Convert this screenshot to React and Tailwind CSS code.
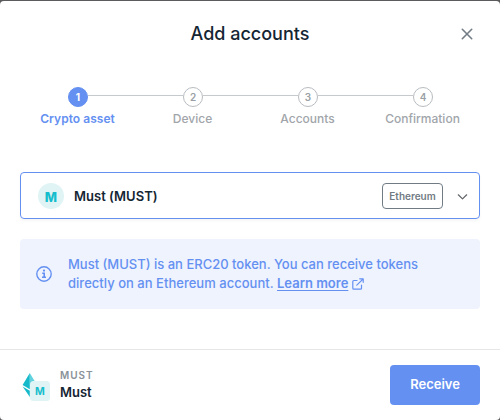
const steps = ["Crypto asset", "Device", "Accounts", "Confirmation"];

function Stepper() {
  return (
    <div className="mt-[21px] grid grid-cols-4 px-5">
      {steps.map((label, i) => (
        <div key={label} className="flex flex-col items-center">
          <div className="flex w-full items-start">
            <div className={`mt-[8px] h-px w-12 ${i > 0 ? "bg-[#c6cacd]" : ""}`} />
            <div
              className={`flex size-5 shrink-0 items-center justify-center rounded-full border text-[10px] leading-none ${
                i === 0 ? "border-[#6490f1] bg-[#6490f1] font-bold text-white" : "border-[#b8bcc0] bg-white font-semibold text-[#999fa5]"
              }`}
            >
              {i + 1}
            </div>
            <div className={`mt-[8px] h-px flex-1 ${i < 3 ? "bg-[#c6cacd]" : ""}`} />
          </div>
          <div
            className={`mt-1 whitespace-nowrap text-[12px] leading-4 ${
              i === 0 ? "font-semibold tracking-[0.03px] text-[#6490f1]" : "font-medium text-[#a1a5aa]"
            }`}
          >
            {label}
          </div>
        </div>
      ))}
    </div>
  );
}

function TokenIcon() {
  return (
    <svg className="mt-1 h-[30px] w-[30px]" viewBox="0 0 30 30">
      <path d="M9.8 1 2.6 13 9.8 17.2z" fill="#15b9c9" />
      <path d="M9.8 1 17 13 9.8 17.2z" fill="#62d3de" />
      <path d="M2.6 14.5 9.8 18.8V25z" fill="#15b9c9" />
      <path d="M17 14.5 9.8 18.8V25z" fill="#62d3de" />
      <rect x="10" y="9" width="20" height="20" rx="3.5" fill="#e0f4f5" />
      <text x="20" y="23" textAnchor="middle" fontSize="10.5" fontWeight="700" fill="#16bdcc">
        M
      </text>
    </svg>
  );
}

export default function App() {
  return (
    <div className="h-[420px] w-[500px] bg-[#5b5b5e] pt-px font-['Inter',sans-serif]">
      <div className="flex h-[419px] flex-col overflow-hidden rounded-[4px] bg-white">
        <header className="grid h-[65px] grid-cols-[40px_1fr_40px] items-center px-[13px]">
          <span />
          <h1 className="text-center text-lg font-medium leading-6 text-[#142533]">Add accounts</h1>
          <button className="flex justify-center" aria-label="Close">
            <svg className="size-4" viewBox="0 0 16 16" fill="none" stroke="#727c85" strokeWidth="1.6" strokeLinecap="round">
              <path d="m3.3 3.3 9.4 9.4M12.7 3.3l-9.4 9.4" />
            </svg>
          </button>
        </header>

        <Stepper />

        <main className="mt-[45px] flex flex-col gap-5 px-5">
          <div className="flex h-[47px] items-center rounded-[4px] border border-[#6490f1] pl-[17px] pr-[10px] shadow-[0_2px_3px_rgba(0,0,0,0.04)]">
            <div className="flex size-[26px] items-center justify-center rounded-full bg-[#e0f4f5] pt-[2px] text-[13px] font-extrabold leading-4 text-[#16bdcc]">
              M
            </div>
            <span className="ml-[10px] flex-1 text-[13px] font-semibold leading-5 tracking-[0.02px] text-[#142533]">Must (MUST)</span>
            <span className="flex h-[26px] w-[61px] items-center justify-center rounded-[4px] border border-[#717b84] pt-px text-[10px] font-semibold text-[#717b84]">
              Ethereum
            </span>
            <svg className="ml-3 size-[14px]" viewBox="0 0 14 14" fill="none" stroke="#606468" strokeWidth="1.2" strokeLinecap="round" strokeLinejoin="round">
              <path d="m3.3 5.8 4.2 4.1 4.2-4.1" />
            </svg>
          </div>

          <div className="flex h-[70px] items-center rounded-[4px] bg-[#eff3fe] pl-4 text-[#6490f1]">
            <svg className="size-4 shrink-0" viewBox="0 0 16 16" fill="none" stroke="currentColor">
              <circle cx="8" cy="8" r="7.2" strokeWidth="1.4" />
              <path d="M6.2 7.2h2v4M6 11.3h4" strokeWidth="1.6" />
              <circle cx="8" cy="4.6" r="1.15" fill="currentColor" stroke="none" />
            </svg>
            <p className="ml-4 whitespace-nowrap text-[13px] font-medium leading-[19px]">
              Must (MUST) is an ERC20 token. You can receive tokens
              <br />
              <span className="tracking-[0.02px]">directly on an Ethereum account. </span>
              <a className="font-semibold underline underline-offset-2">Learn more</a>
              <svg className="ml-1 inline size-3 align-[-2px]" viewBox="0 0 12 12" fill="none" stroke="currentColor" strokeWidth="1.2" strokeLinecap="round" strokeLinejoin="round">
                <path d="M5 2.5H1.8a1 1 0 0 0-1 1v6.7a1 1 0 0 0 1 1h6.7a1 1 0 0 0 1-1V7M7.7.8h3.5v3.5M11.2.8 4.8 7.2" />
              </svg>
            </p>
          </div>
        </main>

        <footer className="mt-auto flex h-[71px] items-center border-t border-[#e5e6e8] px-5">
          <TokenIcon />
          <div className="-mt-[2px] ml-[10px] flex-1">
            <div className="text-[10px] font-semibold leading-4 tracking-[1px] text-[#8a9299]">MUST</div>
            <div className="text-[13px] font-semibold leading-[18px] text-[#142533]">Must</div>
          </div>
          <button className="h-10 w-[90px] rounded-[4px] bg-[#6490f1] text-[13px] font-semibold text-white">Receive</button>
        </footer>
      </div>
    </div>
  );
}
